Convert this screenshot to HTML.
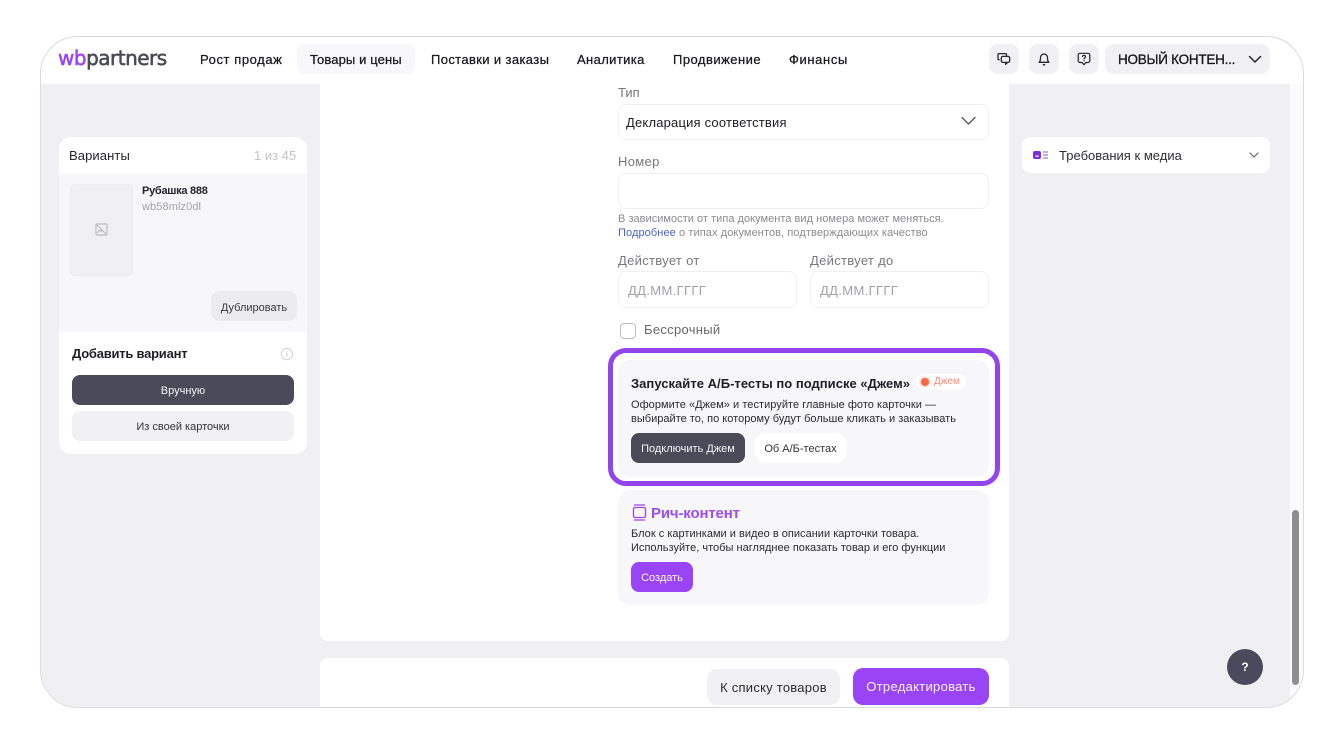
<!DOCTYPE html>
<html lang="ru"><head><meta charset="utf-8"><title>WB Partners</title>
<style>
html,body{margin:0;padding:0;background:#fff}
body{width:1344px;height:744px;position:relative;overflow:hidden;font-family:"Liberation Sans","DejaVu Sans",sans-serif;color:#1c1c22}
.a{position:absolute}
.t{position:absolute;white-space:nowrap;line-height:1}
.box{position:absolute;background:#fff;border:1px solid #f0f0f3;border-radius:8px;box-sizing:border-box}
.btn{position:absolute;border-radius:8px;display:flex;align-items:center;justify-content:center;white-space:nowrap;box-sizing:border-box}
.nav{position:absolute;top:52px;font-size:13px;font-weight:400;line-height:15px;white-space:nowrap;color:#18181c;-webkit-text-stroke:.25px #18181c}
svg{position:absolute;display:block}
</style></head><body>
<div class="a" style="left:41px;top:37px;width:1262px;height:670px;border-radius:37px;overflow:hidden;background:#fff">
 <div class="a" style="left:0;top:47px;width:1249px;height:623px;background:#f0f0f2"></div>
 <div class="a" style="left:1249px;top:47px;width:13px;height:623px;background:#fbfbfc"></div>
 <div class="a" style="left:1251px;top:473px;width:7px;height:175px;border-radius:4px;background:#8e8e90"></div>
 <div class="a" style="left:279px;top:47px;width:689px;height:557px;background:#fff;border-radius:0 0 8px 8px"></div>
 <div class="a" style="left:279px;top:621px;width:689px;height:49px;background:#fff;border-radius:8px 8px 0 0"></div>
</div>
<div class="a" style="left:40px;top:36px;width:1264px;height:672px;border-radius:38px;border:1.5px solid #dbdbdd;box-sizing:border-box"></div>

<!-- header -->
<div class="t" style="left:58px;top:46px;font-family:'DejaVu Sans',sans-serif;font-size:20px;letter-spacing:-.5px;line-height:24px;color:#4a4a55;-webkit-text-stroke:.55px #4a4a55"><span style="color:#9a45f0;-webkit-text-stroke:.55px #9a45f0">wb</span>partners</div>
<div class="nav" style="left:200px;letter-spacing:.57px">Рост продаж</div>
<div class="a" style="left:297px;top:44px;width:118px;height:30px;background:#f8f8fa;border-radius:8px"></div>
<div class="nav" style="left:310px;letter-spacing:.11px">Товары и цены</div>
<div class="nav" style="left:431px;letter-spacing:.37px">Поставки и заказы</div>
<div class="nav" style="left:577px;letter-spacing:.38px">Аналитика</div>
<div class="nav" style="left:673px;letter-spacing:.47px">Продвижение</div>
<div class="nav" style="left:789px;letter-spacing:.62px">Финансы</div>

<div class="a" style="left:989px;top:44px;width:30px;height:30px;background:#f1f1f3;border-radius:9px"></div>
<svg style="left:996px;top:51px" width="16" height="16" viewBox="0 0 16 16" fill="none" stroke="#26262c" stroke-width="1.3" stroke-linejoin="round"><path d="M10.5 5.2V3.6a1 1 0 0 0-1-1H3a1 1 0 0 0-1 1v4.2a1 1 0 0 0 1 1h.6"/><rect x="5.3" y="5.4" width="8.4" height="6" rx="1.6"/><path d="M9.5 11.4v2l2.2-2"/></svg>
<div class="a" style="left:1029px;top:44px;width:30px;height:30px;background:#f1f1f3;border-radius:9px"></div>
<svg style="left:1036px;top:51px" width="16" height="16" viewBox="0 0 16 16" fill="none" stroke="#26262c" stroke-width="1.3" stroke-linecap="round" stroke-linejoin="round"><path d="M3.2 11.3h9.6c-.9-1-1.3-2-1.3-3.6V6.5a3.5 3.5 0 0 0-7 0v1.2c0 1.6-.4 2.600-1.300 3.600z"/><path d="M7.300 13.800h1.400"/></svg>
<div class="a" style="left:1069px;top:44px;width:30px;height:30px;background:#f1f1f3;border-radius:9px"></div>
<svg style="left:1076px;top:51px" width="16" height="16" viewBox="0 0 16 16" fill="none" stroke="#26262c" stroke-width="1.2" stroke-linecap="round" stroke-linejoin="round"><path d="M4 2.300h8a1.800 1.800 0 0 1 1.800 1.800v5.600a1.800 1.800 0 0 1-1.800 1.800H9.800L8 13.800l-1.800-2.300H4a1.800 1.800 0 0 1-1.800-1.800V4.100A1.800 1.800 0 0 1 4 2.300z"/><path d="M6.500 5.500c.2-.8.800-1.100 1.500-1.100.9 0 1.500.5 1.500 1.300 0 1.200-1.500 1.200-1.500 2.300"/><path d="M8 9.700v.1"/></svg>
<div class="a" style="left:1105px;top:44px;width:165px;height:30px;background:#f1f1f3;border-radius:9px"></div>
<div class="t" style="left:1118px;top:52px;font-size:13.500px;line-height:15px;letter-spacing:-.25px;color:#18181c;-webkit-text-stroke:.3px #18181c">НОВЫЙ КОНТЕН...</div>
<svg style="left:1247px;top:52px" width="16" height="14" viewBox="0 0 16 14" fill="none" stroke="#26262c" stroke-width="1.5" stroke-linecap="round" stroke-linejoin="round"><path d="M2.500 4.500l5.500 5.500 5.500-5.500"/></svg>

<!-- left card -->
<div class="a" style="left:59px;top:137px;width:248px;height:317px;background:#fff;border-radius:12px;overflow:hidden">
 <div class="a" style="left:0;top:37px;width:248px;height:158px;background:#f7f7f9"></div>
</div>
<div class="t" style="left:69px;top:148px;font-size:13px;line-height:15px;color:#25252b;letter-spacing:.1px">Варианты</div>
<div class="t" style="left:254px;top:148px;font-size:13px;line-height:15px;color:#c2c2c6">1 из 45</div>
<div class="a" style="left:70px;top:184px;width:63px;height:92px;background:#f0f0f2;border:1px solid #ececef;border-radius:5px;box-sizing:border-box"></div>
<svg style="left:94px;top:222px" width="15" height="15" viewBox="0 0 15 15" fill="none" stroke="#c4c4c8" stroke-width="1.400"><rect x="2" y="2" width="11" height="11" rx="1"/><path d="M2 2l11 11M3 11l3-3 2 2"/></svg>
<div class="t" style="left:142px;top:185px;font-size:11px;line-height:13px;font-weight:700;color:#25252b;letter-spacing:-.27px">Рубашка 888</div>
<div class="t" style="left:142px;top:201px;font-size:11px;line-height:13px;color:#a2a2a8;letter-spacing:.1px">wb58mlz0dl</div>
<div class="btn" style="left:211px;top:291px;width:86px;height:30px;padding-top:3px;background:#ececee;border-radius:9px;font-size:11px;color:#3a3a42">Дублировать</div>
<div class="t" style="left:72px;top:346px;font-size:13px;line-height:15px;font-weight:700;color:#1f1f25;letter-spacing:-.23px">Добавить вариант</div>
<svg style="left:280px;top:347px" width="14" height="14" viewBox="0 0 14 14" fill="none"><circle cx="7" cy="7" r="5.600" stroke="#d6d6d9" stroke-width="1.100"/><path d="M7 6.200v3.200M7 4.300v.6" stroke="#c8c8cc" stroke-width="1.100"/></svg>
<div class="btn" style="left:72px;top:375px;width:222px;height:30px;padding-top:1px;background:#4b4a58;color:#f4f4f6;font-size:11px">Вручную</div>
<div class="btn" style="left:72px;top:411px;width:222px;height:30px;padding-top:1px;background:#f1f1f3;color:#34343a;font-size:11px">Из своей карточки</div>

<!-- form -->
<div class="t" style="left:618px;top:85px;font-size:13px;line-height:15px;color:#77777d">Тип</div>
<div class="box" style="left:618px;top:104px;width:371px;height:36px"></div>
<div class="t" style="left:626px;top:115px;font-size:13px;line-height:15px;color:#1d1d22;letter-spacing:.19px">Декларация соответствия</div>
<svg style="left:960px;top:114px" width="17" height="14" viewBox="0 0 17 14" fill="none" stroke="#55555c" stroke-width="1.300" stroke-linecap="round" stroke-linejoin="round"><path d="M2 3.500l6.500 6.500L15 3.500"/></svg>
<div class="t" style="left:618px;top:154px;font-size:13px;line-height:15px;color:#77777d;letter-spacing:.32px">Номер</div>
<div class="box" style="left:618px;top:173px;width:371px;height:36px"></div>
<div class="t" style="left:618px;top:213px;font-size:11px;line-height:13px;color:#8a8a90;letter-spacing:.03px">В зависимости от типа документа вид номера может меняться.</div>
<div class="t" style="left:618px;top:227px;font-size:11px;line-height:13px;color:#8a8a90;letter-spacing:.09px"><span style="color:#4a62c8">Подробнее</span> о типах документов, подтверждающих качество</div>
<div class="t" style="left:618px;top:253px;font-size:13px;line-height:15px;color:#77777d;letter-spacing:.3px">Действует от</div>
<div class="t" style="left:810px;top:253px;font-size:13px;line-height:15px;color:#77777d;letter-spacing:.3px">Действует до</div>
<div class="box" style="left:618px;top:271px;width:179px;height:37px"></div>
<div class="box" style="left:810px;top:271px;width:179px;height:37px"></div>
<div class="t" style="left:628px;top:283px;font-size:13px;line-height:15px;color:#a0a0a6;letter-spacing:.35px">ДД.ММ.ГГГГ</div>
<div class="t" style="left:820px;top:283px;font-size:13px;line-height:15px;color:#a0a0a6;letter-spacing:.35px">ДД.ММ.ГГГГ</div>
<div class="a" style="left:620px;top:323px;width:16px;height:16px;border:1.500px solid #bcbcc2;border-radius:4px;box-sizing:border-box;background:#fff"></div>
<div class="t" style="left:644px;top:322px;font-size:13px;line-height:15px;color:#66666c;letter-spacing:.3px">Бессрочный</div>

<!-- jam -->
<div class="a" style="left:608px;top:348px;width:392px;height:138px;border:5.500px solid #9145ea;border-radius:18px;box-sizing:border-box;background:#fff"></div>
<div class="a" style="left:618px;top:360px;width:371px;height:117px;background:#f7f7f9;border-radius:12px"></div>
<div class="t" style="left:631px;top:376px;font-size:13px;line-height:15px;font-weight:700;color:#1e1e24;letter-spacing:.03px">Запускайте А/Б-тесты по подписке «Джем»</div>
<div class="a" style="left:916px;top:374px;width:50px;height:16px;border-radius:8px;background:#fff"></div>
<div class="a" style="left:921px;top:378px;width:8px;height:8px;border-radius:50%;background:#f56b45;box-shadow:0 0 2px 1px #fbc4b4"></div>
<div class="t" style="left:934px;top:376px;font-size:10px;line-height:12px;color:#f78a78">Джем</div>
<div class="t" style="left:631px;top:399px;font-size:11px;line-height:13px;color:#2a2a30;letter-spacing:.04px">Оформите «Джем» и тестируйте главные фото карточки —</div>
<div class="t" style="left:631px;top:413px;font-size:11px;line-height:13px;color:#2a2a30;letter-spacing:.02px">выбирайте то, по которому будут больше кликать и заказывать</div>
<div class="btn" style="left:631px;top:433px;width:114px;height:30px;padding-top:1px;background:#4b4a58;color:#f4f4f6;font-size:11px">Подключить Джем</div>
<div class="btn" style="left:754px;top:433px;width:93px;height:30px;padding-top:1px;background:#fff;border-radius:12px;color:#34343a;font-size:11px">Об А/Б-тестах</div>

<!-- rich -->
<div class="a" style="left:618px;top:490px;width:371px;height:115px;background:#f7f7fa;border-radius:12px"></div>
<svg style="left:632px;top:504px" width="15" height="18" viewBox="0 0 15 18" fill="none" stroke="#9a45f0" stroke-width="1.300" stroke-linecap="round"><path d="M2.500 1h10"/><rect x="1.500" y="3.500" width="12" height="10" rx="1.500"/><path d="M2.500 16h10"/></svg>
<div class="t" style="left:651px;top:505px;font-size:15px;line-height:17px;font-weight:700;color:#9a4ef0;letter-spacing:-.16px">Рич-контент</div>
<div class="t" style="left:631px;top:528px;font-size:11px;line-height:13px;color:#2a2a30;letter-spacing:.02px">Блок с картинками и видео в описании карточки товара.</div>
<div class="t" style="left:631px;top:542px;font-size:11px;line-height:13px;color:#2a2a30;letter-spacing:.02px">Используйте, чтобы нагляднее показать товар и его функции</div>
<div class="btn" style="left:631px;top:562px;width:62px;height:30px;padding-top:1px;background:#9a45f5;color:#fbf7ff;font-size:11px">Создать</div>

<!-- footer -->
<div class="btn" style="left:707px;top:669px;width:133px;height:36px;background:#f1f1f3;border-radius:10px;color:#2a2a30;font-size:13px;letter-spacing:.25px">К списку товаров</div>
<div class="btn" style="left:853px;top:668px;width:136px;height:37px;background:#9a45f5;border-radius:10px;color:#f8f2ff;font-size:13px;letter-spacing:.3px">Отредактировать</div>

<!-- right -->
<div class="a" style="left:1022px;top:137px;width:248px;height:36px;background:#fff;border-radius:8px"></div>
<svg style="left:1033px;top:151px" width="15" height="9" viewBox="0 0 15 9" fill="none"><rect x="0" y="0" width="8" height="8" rx="2" fill="#7c2fd6"/><rect x="2.500" y="4.500" width="3" height="1.300" fill="#fff"/><path d="M10 1h5M10 4h5M10 7h5" stroke="#8a5bd0" stroke-width="1.100"/></svg>
<div class="t" style="left:1059px;top:148px;font-size:13px;line-height:15px;color:#2f2f35;letter-spacing:.02px">Требования к медиа</div>
<svg style="left:1247px;top:150px" width="14" height="11" viewBox="0 0 14 11" fill="none" stroke="#66666c" stroke-width="1.200" stroke-linecap="round" stroke-linejoin="round"><path d="M3 3l4 4 4-4"/></svg>

<!-- help -->
<div class="a" style="left:1227px;top:649px;width:36px;height:36px;border-radius:50%;background:#4b4a5c;color:#fff;font-size:12px;font-weight:700;display:flex;align-items:center;justify-content:center">?</div>
</body></html>
